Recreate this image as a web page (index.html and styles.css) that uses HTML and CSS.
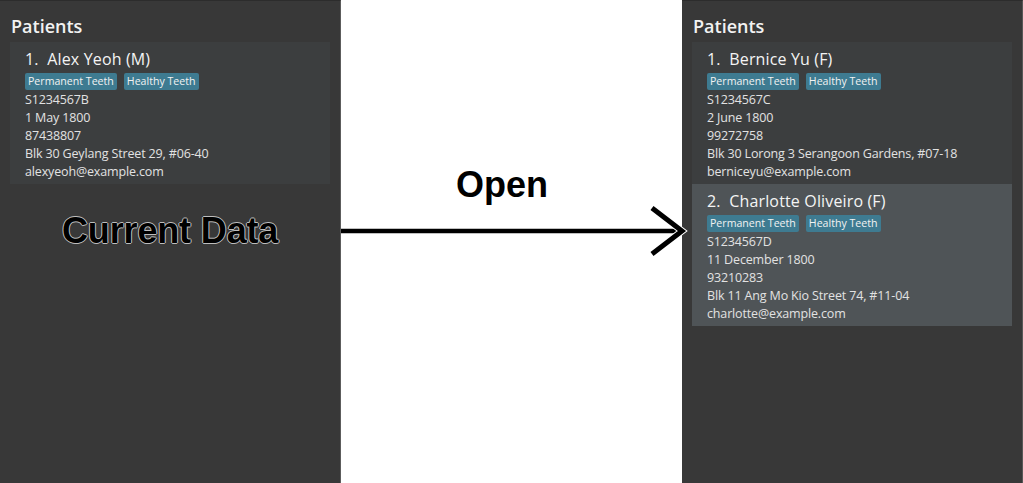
FILE: index.html
```html
<!DOCTYPE html>
<html>
<head>
<meta charset="utf-8">
<link rel="stylesheet" href="styles.css">
</head>
<body>
<div class="stage">
  <section class="panel panel-left">
    <h2 class="title">Patients</h2>
    <div class="card">
      <div class="name">1.&nbsp;&nbsp;Alex Yeoh (M)</div>
      <div class="tags"><span class="tag">Permanent Teeth</span><span class="tag">Healthy Teeth</span></div>
      <div class="line">S1234567B</div>
      <div class="line">1 May 1800</div>
      <div class="line">87438807</div>
      <div class="line">Blk 30 Geylang Street 29, #06-40</div>
      <div class="line">alexyeoh@example.com</div>
    </div>
    <div class="caption">Current Data</div>
  </section>
  <section class="middle">
    <div class="open">Open</div>
  </section>
  <section class="panel panel-right">
    <h2 class="title">Patients</h2>
    <div class="card">
      <div class="name">1.&nbsp;&nbsp;Bernice Yu (F)</div>
      <div class="tags"><span class="tag">Permanent Teeth</span><span class="tag">Healthy Teeth</span></div>
      <div class="line">S1234567C</div>
      <div class="line">2 June 1800</div>
      <div class="line">99272758</div>
      <div class="line">Blk 30 Lorong 3 Serangoon Gardens, #07-18</div>
      <div class="line">berniceyu@example.com</div>
    </div>
    <div class="card card-selected">
      <div class="name">2.&nbsp;&nbsp;Charlotte Oliveiro (F)</div>
      <div class="tags"><span class="tag">Permanent Teeth</span><span class="tag">Healthy Teeth</span></div>
      <div class="line">S1234567D</div>
      <div class="line">11 December 1800</div>
      <div class="line">93210283</div>
      <div class="line">Blk 11 Ang Mo Kio Street 74, #11-04</div>
      <div class="line">charlotte@example.com</div>
    </div>
  </section>
  <svg class="arrow" width="1023" height="483" viewBox="0 0 1023 483">
    <line x1="341" y1="231" x2="680" y2="231" stroke="#000" stroke-width="4.5"/>
    <polyline points="652,208 682,231 652,254" fill="none" stroke="#fff" stroke-width="7" stroke-linejoin="miter"/>
    <polyline points="652,208 682,231 652,254" fill="none" stroke="#000" stroke-width="5" stroke-linejoin="miter"/>
  </svg>
</div>
</body>
</html>
```
FILE: styles.css
```css
html, body {
  margin: 0;
  padding: 0;
  background: #ffffff;
}
.stage {
  position: relative;
  display: flex;
  width: 1023px;
  height: 483px;
  overflow: hidden;
  font-family: "Open Sans", "Noto Sans", sans-serif;
}
.panel {
  position: relative;
  box-sizing: border-box;
  height: 483px;
  background: #383838;
  border-top: 1px solid #2c2c2c;
  padding: 9px 10px 0 10px;
  display: flex;
  flex-direction: column;
}
.panel-left {
  width: 341px;
  border-right: 1px solid #5c5c5c;
}
.panel-right {
  width: 341px;
  border-right: 1px solid #575757;
}
.middle {
  position: relative;
  width: 341px;
  background: #ffffff;
}
.title {
  margin: 0 0 0 1px;
  font-size: 18px;
  font-weight: 600;
  line-height: 32px;
  color: #f2f2f2;
  letter-spacing: 0;
}
.card {
  background: #3c3e3f;
  padding: 6px 15px 3px 15px;
  color: #e6e6e6;
}
.card-selected {
  background: #4f5457;
}
.name {
  font-size: 16px;
  line-height: 22px;
  color: #f4f4f4;
  letter-spacing: 0.15px;
}
.tags {
  display: flex;
  gap: 7px;
  margin-top: 3px;
  height: 17px;
  margin-bottom: 1px;
}
.tag {
  background: #3e7b91;
  color: #f2f2f2;
  font-size: 10.6px;
  line-height: 17px;
  padding: 0 3px;
  border-radius: 2px;
  letter-spacing: 0;
}
.line {
  font-size: 12.5px;
  line-height: 18px;
  color: #e2e2e2;
  letter-spacing: -0.15px;
}
.caption {
  position: absolute;
  left: 62px;
  top: 212px;
  font-family: "Liberation Sans", Arial, sans-serif;
  font-weight: bold;
  font-size: 36px;
  line-height: 36px;
  letter-spacing: -0.15px;
  color: #000;
  text-shadow: 1px 0 0 #bdbdbd, -1px 0 0 #bdbdbd, 0 1px 0 #bdbdbd, 0 -1px 0 #bdbdbd;
}
.open {
  padding: 167px 0 0 115px;
  font-family: "Liberation Sans", Arial, sans-serif;
  font-weight: bold;
  font-size: 36px;
  line-height: 36px;
  color: #000;
}
.arrow {
  position: absolute;
  left: 0;
  top: 0;
  pointer-events: none;
}
```
